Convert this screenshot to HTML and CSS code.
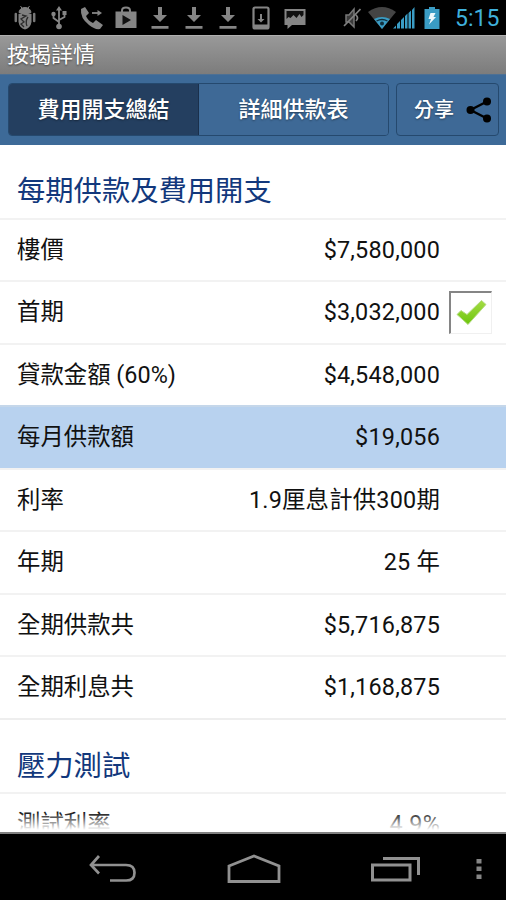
FILE: index.html
```html
<!DOCTYPE html>
<html lang="zh-Hant">
<head>
    <meta charset="UTF-8">
    <meta name="viewport" content="width=device-width, initial-scale=1.0">
    <title>按揭詳情</title>
    <link rel="stylesheet" href="styles.css">
</head>
<body>
    <div class="status-bar">
        <div class="notifications">
            <svg width="22" height="26" viewBox="0 0 22 26">
                <path d="M6.500 1l2 3M15.500 1l-2 3M5 7.500a6 5 0 0 1 12 0z" fill="#808080" stroke="#808080"/>
                <path d="M1.800 9v7M20.200 9v7" stroke="#777" stroke-width="2.500" stroke-linecap="round"/>
                <path d="M4.500 9q6.500-3 13 0v8q-1 6-6.500 7.500Q5.500 23 4.500 17z" fill="#808080"/>
                <path d="M8 10l4 1-5 3 3 3-3 2 3 3M14 12q-3 4-1 9" fill="none" stroke="#2c2c2c" stroke-width="1.300"/>
            </svg>
            <svg width="16" height="24" viewBox="0 0 16 24">
                <path d="M8 3v17M2.500 8v4l5.500 4M13.500 8v3L8 14" fill="none" stroke="#858585" stroke-width="1.800"/>
                <path d="M8 0l3 4.500H5zM11.500 5h4v4h-4z" fill="#858585"/>
                <circle cx="2.500" cy="8" r="2.200" fill="#858585"/>
                <circle cx="8" cy="20.500" r="2.800" fill="#858585"/>
            </svg>
            <svg width="24" height="24" viewBox="0 0 24 24">
                <path d="M1 3l4-2 4 6-3 3q2 5 7 7l3-3 7 5-3 4q-5 1-11-4Q0 12 1 3z" fill="#858585"/>
                <path d="M12 7h7" stroke="#858585" stroke-width="1.800"/>
                <path d="M17.500 4l4.500 3-4.500 3z" fill="#858585"/>
            </svg>
            <svg width="22" height="24" viewBox="0 0 22 24">
                <path d="M7 7V4.500q0-3 4-3t4 3V7" fill="none" stroke="#858585" stroke-width="2"/>
                <path d="M.5 5.500h21v16.500H.5z" fill="#858585"/>
                <path d="M7.500 9l8.500 5-8.500 5z" fill="#111"/>
            </svg>
            <svg width="18" height="24" viewBox="0 0 18 24"><path d="M7 1h4v8h5l-7 7-7-7h5zM.5 20h17v2.800H.5z" fill="#858585"/></svg>
            <svg width="18" height="24" viewBox="0 0 18 24"><path d="M7 1h4v8h5l-7 7-7-7h5zM.5 20h17v2.800H.5z" fill="#858585"/></svg>
            <svg width="18" height="24" viewBox="0 0 18 24"><path d="M7 1h4v8h5l-7 7-7-7h5zM.5 20h17v2.800H.5z" fill="#858585"/></svg>
            <svg width="18" height="24" viewBox="0 0 18 24">
                <rect x="1.500" y="1.500" width="15" height="21" rx="1.500" fill="none" stroke="#858585" stroke-width="2.200"/>
                <path d="M2 18.500h14V22H2zM8 8h2v5h2.500L9 16.500 5.500 13H8z" fill="#858585"/>
            </svg>
            <svg width="24" height="24" viewBox="0 0 24 24">
                <path d="M1.500 3h21v16H9l-4.500 4v-4h-3z" fill="#858585"/>
                <path d="M3.500 5h17v4l-2 2-2-3-3 4-3-3-3 3-2-1-2 2z" fill="#111"/>
            </svg>
        </div>
        <div class="system-icons">
            <svg class="mute" width="18" height="24" viewBox="0 0 18 24">
                <path d="M3 9h3l5-6v18l-5-5H3z" fill="#3a3a3a" stroke="#777" stroke-width="1.500"/>
                <path d="M1 20L17.500 3M13 9q3 3 0 6" fill="none" stroke="#808080" stroke-width="1.700"/>
            </svg>
            <svg class="wifi" width="28" height="24" viewBox="0 0 28 24">
                <path d="M0 6Q14-4 28 6L14 23z" fill="#444"/>
                <path d="M6 13q8-4 16 0l-8 10z" fill="#3a9cc4"/>
                <path d="M8.500 15q5.500-3 11 0" fill="none" stroke="#12303e" stroke-width="1.300"/>
                <circle cx="14" cy="17.500" r="2" fill="#12303e"/>
            </svg>
            <svg class="signal" width="22" height="24" viewBox="0 0 22 24">
                <path d="M0 22.500l3-3v3zM4 18l3-3v7.500H4zM8 14l3-3v11.500H8zM12 10l2.500-2.500v15H12zM15.500 7L18 4.500v18h-2.500zM19 4l2.500-3v21.500H19z" fill="#3a9cc4"/>
            </svg>
            <svg class="battery" width="16" height="24" viewBox="0 0 16 24">
                <path d="M5 1h6v2h4.500v20H.5V3H5z" fill="#3a9cc4"/>
                <path d="M6.500 7h5l-2 4h2.500L5 18.500l2-5.500H4.500z" fill="#eef8fc"/>
            </svg>
            <span class="clock">5:15</span>
        </div>
    </div>

    <div class="title-bar">按揭詳情</div>

    <div class="toolbar">
        <div class="tabs">
            <button class="tab active">費用開支總結</button>
            <button class="tab">詳細供款表</button>
        </div>
        <button class="share">
            分享
            <svg width="26" height="26" viewBox="0 0 26 26">
                <path d="M21 4.500L4.500 13 21 21.500" fill="none" stroke="#000" stroke-width="2.400"/>
                <circle cx="21" cy="4.500" r="4"/><circle cx="4.500" cy="13" r="4"/><circle cx="21" cy="21.500" r="4"/>
            </svg>
        </button>
    </div>

    <div class="content">
        <h2>每期供款及費用開支</h2>
        <div class="row"><span>樓價</span><span class="value">$7,580,000</span></div>
        <div class="row">
            <span>首期</span><span class="value">$3,032,000</span>
            <span class="checkbox">
                <svg width="32" height="28" viewBox="0 0 32 28">
                    <defs>
                        <linearGradient id="tick" x1="0" y1="0" x2="0" y2="1">
                            <stop offset="0" stop-color="#a5dc45"/>
                            <stop offset="1" stop-color="#6cc50c"/>
                        </linearGradient>
                    </defs>
                    <path d="M2 15.500L6 11.500L12 15.500L26.500 1.500L31 5.500L13 25.500z" fill="url(#tick)" stroke="#b5dc83" stroke-width="1" stroke-linejoin="round"/>
                </svg>
            </span>
        </div>
        <div class="row"><span>貸款金額 (60%)</span><span class="value">$4,548,000</span></div>
        <div class="row highlight"><span>每月供款額</span><span class="value">$19,056</span></div>
        <div class="row"><span>利率</span><span class="value">1.9厘息計供300期</span></div>
        <div class="row"><span>年期</span><span class="value">25 年</span></div>
        <div class="row"><span>全期供款共</span><span class="value">$5,716,875</span></div>
        <div class="row"><span>全期利息共</span><span class="value">$1,168,875</span></div>
        <h2>壓力測試</h2>
        <div class="row"><span>測試利率</span><span class="value">4.9%</span></div>
    </div>

    <div class="nav-bar">
        <svg class="back" width="48" height="28" viewBox="0 0 48 28">
            <path d="M10 1L2 10l8 8.500M2 10h35q8.500 0 8.500 7.800t-8.500 7.700H21" fill="none" stroke="#919191" stroke-width="2.700"/>
        </svg>
        <svg class="home" width="54" height="30" viewBox="0 0 54 30">
            <path d="M2 12L27 2l25 10v15.500H2z" fill="none" stroke="#919191" stroke-width="2.800"/>
        </svg>
        <svg class="recent" width="50" height="26" viewBox="0 0 50 26">
            <path d="M1.500 9H39v15H1.500zM12 2.500h35.500V19" fill="none" stroke="#919191" stroke-width="3"/>
        </svg>
        <svg class="more" width="6" height="22" viewBox="0 0 6 22">
            <path d="M.5 1h5v4.500h-5zM.5 8.500h5V13h-5zM.5 16.500h5V21h-5z" fill="#858585"/>
        </svg>
    </div>
</body>
</html>
```
FILE: styles.css
```css
* {
    margin: 0;
    padding: 0;
    box-sizing: border-box;
}

body {
    height: 900px;
    display: flex;
    flex-direction: column;
    background: #fff;
    color: #111;
    font-family: Roboto, "Noto Sans CJK TC", sans-serif;
    overflow: hidden;
}

svg {
    display: block;
    flex: none;
}

.status-bar {
    height: 35px;
    flex: none;
    display: flex;
    justify-content: space-between;
    background: #000;
}

.notifications {
    width: 304px;
    margin-left: 8px;
    display: grid;
    grid-template-columns: repeat(9, 1fr);
    align-items: center;
    justify-items: center;
    padding-top: 1px;
}

.system-icons {
    display: flex;
    align-items: center;
    padding: 1px 8px 0 0;
}

.wifi {
    margin-left: 7px;
}

.signal {
    margin-left: -3px;
}

.battery {
    margin: 0 15px 0 9px;
}

.clock {
    width: 43px;
    color: #3fb0dc;
    font-size: 23px;
    line-height: 34px;
    padding-top: 2px;
    white-space: nowrap;
}

.title-bar {
    height: 39px;
    flex: none;
    padding-left: 7px;
    background: linear-gradient(#999, #7c7c7c);
    border-top: 1px solid #b0b0b0;
    color: #fff;
    font-size: 22px;
    line-height: 38px;
    text-shadow: 0 1px 2px rgba(0, 0, 0, 0.5);
}

.toolbar {
    height: 71px;
    flex: none;
    display: flex;
    gap: 7px;
    padding: 8px 7px 9px 8px;
    background: #3d6a98;
    border-top: 1px solid #4d7094;
}

.tabs {
    width: 381px;
    display: flex;
    border: 1px solid #25496e;
    border-radius: 4px;
    overflow: hidden;
}

.tab,
.share {
    background: #3e6996;
    border: none;
    color: #fff;
    font: 500 22px/30px Roboto, "Noto Sans CJK TC", sans-serif;
    text-shadow: 0 1px 2px rgba(0, 0, 0, 0.4);
}

.tab {
    flex: 1;
}

.tab.active {
    background: #243f60;
    border-right: 1px solid #1a304c;
}

.share {
    flex: 1;
    display: flex;
    align-items: center;
    justify-content: space-between;
    padding: 0 6px 0 17px;
    border: 1px solid #25496e;
    border-radius: 4px;
    font-size: 20px;
}

.content {
    position: relative;
    flex: 1;
    min-height: 0;
    overflow: hidden;
}

/* fading edge at the bottom of the scroll area */
.content::after {
    content: '';
    position: absolute;
    left: 0;
    right: 0;
    bottom: 0;
    height: 20px;
    background: linear-gradient(rgba(255, 255, 255, 0), #fff 90%);
}

h2 {
    height: 72.500px;
    padding: 28px 17px 0;
    color: #12387c;
    font-size: 28.300px;
    font-weight: 400;
    line-height: 38px;
}

.row {
    height: 62.500px;
    display: flex;
    align-items: center;
    padding: 0 14px 0 17px;
    border-top: 2px solid #f2f2f2;
    font-size: 23.400px;
    line-height: 34px;
}

.row.highlight {
    background: #b8d2ef;
    border-top-color: #c5d7ea;
}

.value {
    margin-left: auto;
    margin-right: 52px;
    letter-spacing: 0.200px;
}

.checkbox {
    width: 43px;
    height: 43px;
    margin-left: -43px;
    display: flex;
    align-items: center;
    justify-content: center;
    border: 1px solid #f0f0f0;
    border-top: 2px solid #858585;
    border-left: 2px solid #858585;
}

.row + h2 {
    height: 74px;
    border-top: 2px solid #eee;
}

.nav-bar {
    height: 68px;
    flex: none;
    display: flex;
    align-items: center;
    padding: 4px 24px 0 89px;
    background: #000;
    border-top: 2px solid #808080;
}

.home {
    margin-left: 90px;
}

.recent {
    margin-left: 90px;
}

.more {
    margin-left: auto;
}
```
